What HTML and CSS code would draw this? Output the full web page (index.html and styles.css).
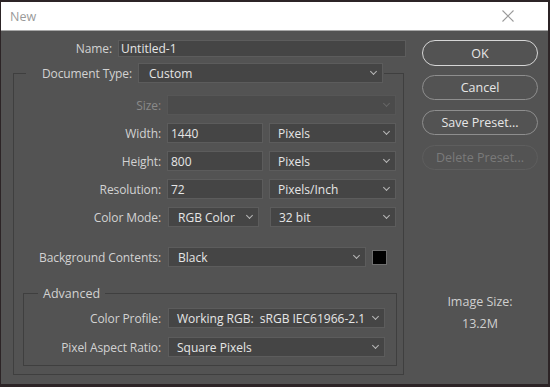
FILE: index.html
```html
<!DOCTYPE html>
<html lang="en">
<head>
  <meta charset="UTF-8">
  <meta name="viewport" content="width=device-width, initial-scale=1.0">
  <title>New</title>
  <link rel="stylesheet" href="styles.css">
</head>
<body>
  <div class="window">
    <div class="titlebar">
      <span class="title">New</span>
      <svg class="close" width="12" height="12" viewBox="0 0 12 12">
        <path d="M0.5 0.5 L11.5 11.5 M11.5 0.5 L0.5 11.5" stroke="#9a9a9a" stroke-width="1.1" fill="none"/>
      </svg>
    </div>

    <div class="dialog">
      <div class="left">
        <div class="row name-row">
          <label class="lbl name-lbl">Name:</label>
          <div class="input name-input">Untitled-1</div>
        </div>

        <fieldset class="group">
          <legend class="doc-legend">
            <span class="lbl doc-lbl">Document Type:</span>
            <span class="select doc-select">Custom</span>
          </legend>

          <div class="row">
            <label class="lbl disabled">Size:</label>
            <div class="select size-select disabled-field"></div>
          </div>
          <div class="row">
            <label class="lbl">Width:</label>
            <div class="input num-input">1440</div>
            <div class="select unit-select">Pixels</div>
          </div>
          <div class="row">
            <label class="lbl">Height:</label>
            <div class="input num-input">800</div>
            <div class="select unit-select">Pixels</div>
          </div>
          <div class="row">
            <label class="lbl">Resolution:</label>
            <div class="input num-input">72</div>
            <div class="select unit-select">Pixels/Inch</div>
          </div>
          <div class="row">
            <label class="lbl">Color Mode:</label>
            <div class="select mode-select">RGB Color</div>
            <div class="select bit-select">32 bit</div>
          </div>
          <div class="row bg-row">
            <label class="lbl">Background Contents:</label>
            <div class="select bg-select">Black</div>
            <div class="swatch"></div>
          </div>

          <fieldset class="advanced">
            <legend class="adv-legend">Advanced</legend>
            <div class="row">
              <label class="lbl adv-lbl">Color Profile:</label>
              <div class="select adv-select">Working RGB:&nbsp; sRGB IEC61966-2.1</div>
            </div>
            <div class="row">
              <label class="lbl adv-lbl">Pixel Aspect Ratio:</label>
              <div class="select adv-select">Square Pixels</div>
            </div>
          </fieldset>
        </fieldset>
      </div>

      <div class="right">
        <button class="btn primary">OK</button>
        <button class="btn">Cancel</button>
        <button class="btn">Save Preset...</button>
        <button class="btn disabled-btn">Delete Preset...</button>

        <div class="image-size">
          <div>Image Size:</div>
          <div class="size-value">13.2M</div>
        </div>
      </div>
    </div>
  </div>
</body>
</html>
```

FILE: styles.css
```css
* {
  margin: 0;
  padding: 0;
  box-sizing: border-box;
}

body {
  background: #2c2426;
  font-family: "Open Sans", "Noto Sans", Arial, sans-serif;
  font-size: 12px;
  color: #d2d2d2;
}

.window {
  margin: 2px 0 0 1px;
  width: 547px;
  height: 382px;
  background: #535353;
}

/* barra de título */
.titlebar {
  height: 29px;
  background: #fff;
  border-bottom: 1px solid #a8a8a8;
  display: flex;
  align-items: center;
  justify-content: space-between;
  padding: 0 34px 0 9px;
}

.title {
  color: #9a9a9a;
  font-size: 12.5px;
}

.dialog {
  display: flex;
  padding: 9px 0 0 12px;
}

.left {
  width: 394px;
}

.right {
  margin-left: 15px;
  width: 116px;
  display: flex;
  flex-direction: column;
  gap: 10px;
}

/* linhas de campos */
.row {
  display: flex;
  align-items: center;
  height: 20px;
  gap: 6px;
}

.lbl {
  width: 147px;
  text-align: right;
  white-space: nowrap;
  color: #d2d2d2;
  letter-spacing: -0.1px;
}

.lbl.disabled {
  color: #8a8a8a;
}

.name-row {
  height: 17px;
}

.name-lbl {
  width: 99px;
}

.input,
.select {
  height: 20px;
  background: #454545;
  border: 1px solid #5c5c5c;
  color: #e6e6e6;
  display: flex;
  align-items: center;
  white-space: nowrap;
}

.input {
  padding-left: 3px;
}

.select {
  padding: 0 6px 0 8px;
}

.select::after {
  content: '';
  margin-left: auto;
  width: 4px;
  height: 4px;
  border-right: 1px solid #b8b8b8;
  border-bottom: 1px solid #b8b8b8;
  transform: rotate(45deg);
  margin-top: -3px;
}

.name-input {
  width: 288px;
  height: 17px;
  padding-left: 2px;
}

/* grupo principal */
.group {
  margin-top: 6px;
  width: 391px;
  border: 1px solid #3f3f3f;
  padding: 12px 0 8px;
  min-inline-size: 0;
  display: flex;
  flex-direction: column;
  gap: 8px;
}

.doc-legend {
  margin-left: 12px;
  padding: 0 1px 0 0;
  display: flex;
  align-items: center;
  gap: 6px;
}

.doc-lbl {
  width: 106px;
}

.doc-select {
  width: 245px;
  padding-left: 10px;
}

.size-select {
  width: 229px;
}

.disabled-field {
  background: #4b4b4b;
  border-color: #565656;
}

.disabled-field::after {
  border-color: #666;
}

.num-input {
  width: 96px;
}

.unit-select {
  width: 127px;
}

.mode-select {
  width: 91px;
  margin-left: 1px;
  padding-left: 9px;
}

.bit-select {
  width: 126px;
  margin-left: 5px;
}

.bg-row {
  margin-top: 12px;
}

.bg-select {
  width: 198px;
  margin-left: 1px;
  padding-left: 9px;
}

.swatch {
  width: 15px;
  height: 15px;
  background: #000;
  border: 1px solid #6e6e6e;
}

/* Advanced */
.advanced {
  margin: 10px 6px 0 9px;
  border: 1px solid #3f3f3f;
  padding: 6px 0 8px;
  min-inline-size: 0;
  display: flex;
  flex-direction: column;
  gap: 9px;
}

.adv-legend {
  margin-left: 14px;
  padding: 0 5px;
  font-size: 12.5px;
  color: #d2d2d2;
}

.adv-lbl {
  width: 137px;
}

.adv-select {
  width: 217px;
  margin-left: 1px;
  padding-left: 8px;
}

/* botões */
.btn {
  height: 25px;
  border-radius: 13px;
  border: 1.5px solid #8e8e8e;
  background: #535353;
  color: #e6e6e6;
  font-family: inherit;
  font-size: 12.5px;
}

.btn.primary {
  height: 26px;
  border-color: #d6d6d6;
  margin-bottom: -1px;
}

.btn.disabled-btn {
  border-color: #5e5e5e;
  color: #7a7a7a;
}

.image-size {
  margin-top: 114px;
  text-align: center;
  font-size: 12.5px;
  color: #cfcfcf;
  line-height: 16px;
}

.size-value {
  margin-top: 6px;
}
```
